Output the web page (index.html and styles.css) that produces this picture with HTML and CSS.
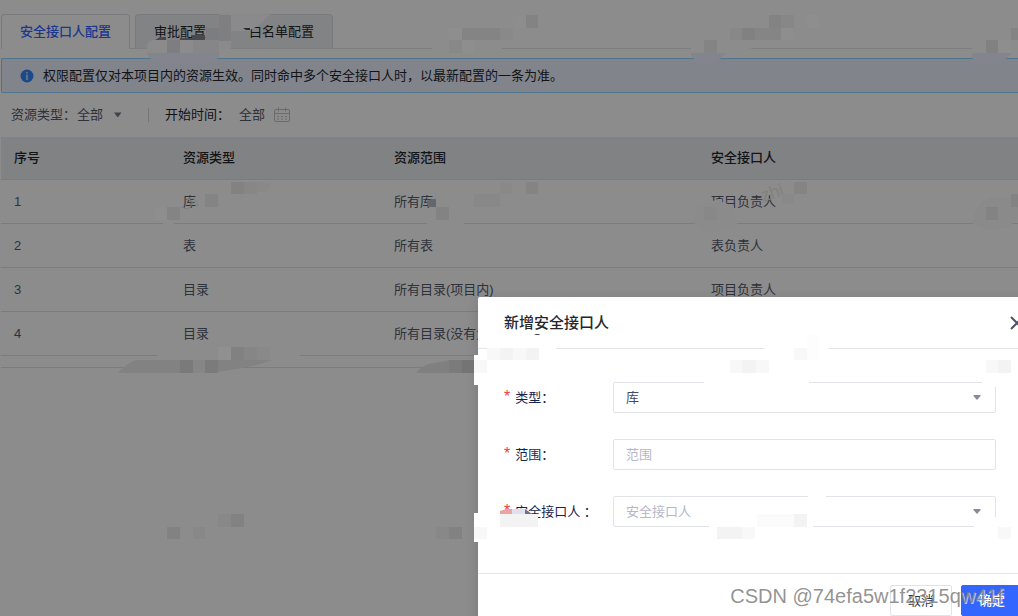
FILE: index.html
```html
<!DOCTYPE html>
<html lang="zh-CN">
<head>
<meta charset="utf-8">
<title>安全接口人配置</title>
<link rel="stylesheet" href="styles.css">
</head>
<body>
<main class="page">
  <nav class="tabs">
    <button class="tab tab-active" type="button">安全接口人配置</button>
    <button class="tab" type="button">审批配置</button>
    <button class="tab" type="button">白名单配置</button>
  </nav>
  <div class="alert">
    <svg class="info" viewBox="0 0 14 14" aria-hidden="true"><circle cx="7" cy="7" r="6.5" fill="#3388f5"/><rect x="6.3" y="3" width="1.4" height="1.5" fill="#dce9ff"/><rect x="6.3" y="5.6" width="1.4" height="5.4" fill="#dce9ff"/></svg>
    <span>权限配置仅对本项目内的资源生效。同时命中多个安全接口人时，以最新配置的一条为准。</span>
  </div>
  <div class="filters">
    <button class="filter" type="button"><span>资源类型：</span><span>全部</span><svg class="caret" viewBox="0 0 9 6" aria-hidden="true"><path d="M1 0.500h7.500L4.700 5.500z" fill="currentColor"/></svg></button>
    <span class="divider"></span>
    <button class="filter filter-time" type="button"><span class="strong">开始时间：</span><span>全部</span><svg class="calendar" viewBox="0 0 16 16" fill="none" stroke="#bfc3c8" aria-hidden="true"><rect x="0.500" y="2.500" width="15" height="12" rx="1.500"/><path d="M0.500 6.500h15M4.500 0.500v4M11.500 0.500v4M3 9.500h2M7 9.500h2M11 9.500h2M3 12h2M7 12h2M11 12h2"/></svg></button>
  </div>
  <table class="grid">
    <thead><tr><th class="c-id">序号</th><th class="c-type">资源类型</th><th class="c-scope">资源范围</th><th>安全接口人</th></tr></thead>
    <tbody>
      <tr><td>1</td><td>库</td><td>所有库</td><td>项目负责人</td></tr>
      <tr><td>2</td><td>表</td><td>所有表</td><td>表负责人</td></tr>
      <tr><td>3</td><td>目录</td><td>所有目录(项目内)</td><td>项目负责人</td></tr>
      <tr><td>4</td><td>目录</td><td>所有目录(没有负责人)</td><td>项目负责人</td></tr>
    </tbody>
  </table>
  <div class="grid-end"></div>
</main>
<div class="mask"></div>
<section class="modal" role="dialog" aria-labelledby="title">
  <header class="modal-head">
    <h2 class="title" id="title">新增安全接口人</h2>
    <button class="close" type="button" aria-label="关闭"><svg viewBox="0 0 14 14" fill="none" stroke="#4e5466" stroke-width="2"><path d="M1 1l12 12M13 1L1 13"/></svg></button>
  </header>
  <form class="form">
    <div class="row">
      <label class="label" for="type"><span class="star">*</span>类型：</label>
      <div class="field"><select class="control" id="type"><option>库</option></select><svg class="arrow" viewBox="0 0 8 5" aria-hidden="true"><path d="M0.500 0h7v1L4 5L0.500 1z" fill="#858b99"/></svg></div>
    </div>
    <div class="row">
      <label class="label" for="scope"><span class="star">*</span>范围：</label>
      <div class="field"><input class="control" id="scope" type="text" placeholder="范围"></div>
    </div>
    <div class="row">
      <label class="label" for="owner"><span class="star">*</span>安全接口人 ：</label>
      <div class="field"><select class="control empty" id="owner"><option>安全接口人</option></select><svg class="arrow" viewBox="0 0 8 5" aria-hidden="true"><path d="M0.500 0h7v1L4 5L0.500 1z" fill="#858b99"/></svg></div>
    </div>
  </form>
  <footer class="modal-foot">
    <button class="btn" type="button">取消</button>
    <button class="btn btn-primary" type="button">确定</button>
  </footer>
</section>
<svg class="mosaic" width="1018" height="616" viewBox="0 0 1018 616" aria-hidden="true">
  <!-- tab strip -->
  <path fill="#8a8a8c" d="M219 13h53l-14 13l-10 5h-17v18h-12z"/>
  <path fill="#8b8b8c" d="M147 45q2-5 7-5h66v13h-73z"/>
  <path fill="#82848e" d="M147 53h73q-2 9-12 11h-48q-9-2-13-11z"/>
  <rect x="219" y="15" width="12" height="26" fill="#7f7f81"/><rect x="206" y="28" width="13" height="12" fill="#7b7d80"/>
  <path fill="#48494c" d="M155 40l5-3h6v3zM180 40v-2h12v-3h13v5z"/>
  <rect x="167" y="40" width="13" height="13" fill="#7e7e82"/><rect x="180" y="40" width="13" height="13" fill="#8b8b8d"/><rect x="193" y="40" width="26" height="13" fill="#868689"/>
  <path fill="#28292c" d="M243 28h7v2h-4z"/>
  <!-- upper band -->
  <rect x="432" y="41" width="70" height="12" fill="#8c8c8c"/>
  <rect x="526" y="15" width="12" height="13" fill="#838383"/><rect x="513" y="15" width="13" height="13" fill="#8d8d8d"/>
  <rect x="449" y="28" width="13" height="12" fill="#8e8e8e"/><rect x="462" y="28" width="38" height="12" fill="#848484"/><rect x="500" y="28" width="13" height="12" fill="#898989"/>
  <rect x="449" y="40" width="13" height="13" fill="#888888"/><rect x="462" y="40" width="12" height="13" fill="#8e8e8e"/>
  <path fill="#8c8c8c" d="M691 41h63v7l-22 5h-41z"/><path fill="#82848e" d="M691 53h35l-6 6l-6 4h-17l-6-8z"/>
  <rect x="704" y="40" width="13" height="13" fill="#848484"/><rect x="730" y="28" width="12" height="12" fill="#888888"/><rect x="742" y="28" width="13" height="12" fill="#818181"/><rect x="755" y="28" width="26" height="12" fill="#858585"/><rect x="781" y="28" width="12" height="12" fill="#8e8e8e"/>
  <rect x="769" y="15" width="12" height="13" fill="#838383"/><rect x="781" y="15" width="13" height="13" fill="#878787"/><rect x="807" y="15" width="12" height="13" fill="#8e8e8e"/>
  <rect x="972" y="41" width="46" height="12" fill="#8c8c8c"/><path fill="#82848e" d="M972 53h40l-6 6l-7 6h-19l-8-7z"/>
  <rect x="986" y="40" width="12" height="13" fill="#818181"/><rect x="998" y="40" width="13" height="13" fill="#8e8e8e"/><rect x="1011" y="28" width="7" height="12" fill="#848484"/>
  <!-- first table row -->
  <rect x="231" y="182" width="13" height="12" fill="#828282"/><rect x="244" y="182" width="13" height="12" fill="#878787"/><path fill="#898989" d="M257 182h14l-4 10h-10z"/>
  <rect x="205" y="194" width="13" height="13" fill="#848484"/><rect x="155" y="207" width="12" height="13" fill="#8e8e8e"/><rect x="167" y="207" width="13" height="13" fill="#848484"/><rect x="163" y="220" width="11" height="6" fill="#8c8c8c"/>
  <path d="M181 207q9 5 11-4q-1-5-5-3q5-4 9 1q3 4 1 6" fill="none" stroke="#808080"/>
  <path fill="#66666f" d="M427 201l5-2h4v8h-8z"/><rect x="436" y="207" width="13" height="13" fill="#838383"/><rect x="427" y="220" width="37" height="6" fill="#8c8c8c"/>
  <rect x="474" y="194" width="26" height="13" fill="#888888"/><rect x="500" y="182" width="12" height="12" fill="#898989"/><rect x="526" y="182" width="12" height="12" fill="#848484"/>
  <path fill="#8b8b8c" d="M697 208l8-4l13-5h4v3l12 4v10l4 10q-17 7-35 4l-9-7z"/><rect x="704" y="207" width="13" height="13" fill="#888888"/>
  <text x="763" y="202" class="ghost" transform="rotate(-18 763 202)">zhi</text>
  <rect x="794" y="182" width="13" height="12" fill="#848484"/><rect x="782" y="194" width="12" height="10" fill="#898989"/>
  <path fill="#8a8a8a" d="M973 224q0-21 20-27h25v22l-10 8q-17 6-35-3z"/><rect x="986" y="207" width="12" height="13" fill="#838383"/><rect x="1011" y="194" width="7" height="13" fill="#838383"/>
  <!-- below the table -->
  <rect x="157" y="347" width="143" height="12" fill="#8c8c8c"/>
  <path fill="#828282" d="M118 373q7-9 18-13h136q-20 8-63 13z"/>
  <rect x="218" y="347" width="13" height="13" fill="#909090"/><rect x="231" y="347" width="13" height="13" fill="#818181"/><rect x="244" y="347" width="13" height="13" fill="#868686"/><rect x="257" y="347" width="13" height="13" fill="#898989"/>
  <rect x="180" y="360" width="13" height="13" fill="#7a7a7a"/><rect x="193" y="360" width="12" height="13" fill="#868686"/><rect x="205" y="360" width="13" height="13" fill="#7b7b7b"/>
  <path fill="#808080" d="M416 373q7-9 18-10l18-3h22v13z"/><rect x="449" y="360" width="13" height="13" fill="#7b7b7b"/><rect x="462" y="360" width="12" height="13" fill="#747474"/>
  <g fill="#828282"><rect x="167" y="527" width="13" height="12"/><rect x="231" y="514" width="13" height="13"/><rect x="449" y="527" width="13" height="12"/></g>
  <g fill="#888888"><rect x="193" y="527" width="12" height="12"/><rect x="218" y="514" width="13" height="13"/><rect x="436" y="527" width="13" height="12"/></g>
  <!-- dialog -->
  <g fill="#ffffff"><rect x="474" y="355" width="6" height="30"/><rect x="474" y="513" width="6" height="29"/><rect x="494" y="345" width="62" height="6"/><rect x="765" y="345" width="64" height="6"/><rect x="704" y="379" width="105" height="6"/><rect x="982" y="379" width="16" height="8"/><rect x="709" y="523" width="104" height="6"/><rect x="974" y="517" width="24" height="12"/><rect x="808" y="494" width="18" height="5"/><path d="M500 512l8-3h18l6 5v6h-32z"/></g>
  <path fill="#43444b" d="M534 335l2-1h3l1 1z"/>
  <g fill="#f3f3f3"><rect x="500" y="348" width="13" height="12"/><rect x="526" y="348" width="13" height="12"/><rect x="742" y="360" width="14" height="13"/><rect x="998" y="360" width="13" height="13"/><rect x="794" y="514" width="13" height="13"/><rect x="717" y="527" width="13" height="12"/><rect x="730" y="527" width="12" height="12"/><rect x="500" y="514" width="38" height="13"/></g>
  <g fill="#f8f8f8"><rect x="513" y="348" width="13" height="12"/><rect x="487" y="348" width="13" height="12"/><rect x="474" y="360" width="13" height="13"/><rect x="730" y="360" width="12" height="13"/><rect x="756" y="360" width="13" height="13"/><rect x="794" y="348" width="13" height="12"/><rect x="807" y="335" width="12" height="25" fill="#fdfdfd"/><rect x="986" y="360" width="12" height="13"/><rect x="757" y="514" width="37" height="13" fill="#fbfbfb"/><rect x="742" y="527" width="13" height="12"/><rect x="998" y="527" width="13" height="12"/><rect x="474" y="527" width="13" height="12"/></g>
  <path fill="#e9a3a5" d="M500 514v-3l6-2h6v5z"/><rect x="512" y="509" width="13" height="5" fill="#dfe1f3"/><path fill="#70727c" d="M525 509l7 5h-7z"/>
</svg>
<div class="watermark">CSDN @74efa5w1f2315qw41f</div>
</body>
</html>
```
FILE: styles.css
```css
* { box-sizing: border-box; }
html, body { height: 100%; }
body {
  margin: 0;
  overflow: hidden;
  position: relative;
  background: #fff;
  color: #555b6b;
  font: 13px/20px "Liberation Sans", "Noto Sans CJK SC", sans-serif;
}
button, input, select { font: inherit; color: inherit; margin: 0; }
button { padding: 0; border: 0; background: none; }
.page { padding: 14px 0 0 1px; }
.tabs { display: flex; gap: 5px; border-bottom: 1px solid #e2e4e6; }
.tab {
  height: 34px;
  padding: 0 18px;
  border: 1px solid #dcdfe3;
  border-bottom: 0;
  border-radius: 4px 4px 0 0;
  background: #edeff3;
  color: #24262b;
}
.tab-active {
  position: relative;
  margin-bottom: -1px;
  height: 35px;
  background: #fff;
  color: #3366ff;
  font-weight: 500;
}
.alert {
  display: flex;
  align-items: center;
  gap: 9px;
  height: 35px;
  margin-top: 9px;
  padding: 0 18px;
  border: 1px solid #91d5ff;
  border-right: 0;
  border-radius: 2px 0 0 2px;
  background: #edf0ff;
  color: #24262b;
}
.info { width: 14px; height: 14px; }
.filters { display: flex; align-items: center; height: 44px; padding-left: 10px; }
.filter { display: flex; align-items: center; gap: 1px; }
.caret { width: 9px; height: 6px; margin-left: 9px; color: #767b85; }
.divider { width: 1px; height: 14px; margin: 0 16px 0 26px; background: #d4d6da; }
.filter-time { gap: 9px; }
.strong { color: #24262b; }
.calendar { width: 16px; height: 16px; }
.grid { width: 100%; border-collapse: separate; border-spacing: 0; table-layout: fixed; }
.grid th, .grid td {
  height: 44px;
  padding: 0 13px;
  border-bottom: 1px solid #e0e2e4;
  text-align: left;
}
.grid th { height: 43px; background: #ebedf0; color: #24262b; font-weight: 500; }
.c-id { width: 169px; }
.c-type { width: 211px; }
.c-scope { width: 317px; }
.grid-end { height: 12px; border-bottom: 1px solid #e0e2e4; }
.mask { position: absolute; inset: 0; background: rgba(0, 0, 0, 0.45); }
.modal {
  position: absolute;
  top: 297px;
  left: 478px;
  right: -20px;
  background: #fff;
  border-radius: 2px;
  box-shadow: 0 4px 12px rgba(0, 0, 0, 0.15);
}
.modal-head {
  display: flex;
  align-items: center;
  justify-content: space-between;
  height: 52px;
  padding: 0 14px 0 26px;
  border-bottom: 1px solid #e4e5e8;
}
.title { margin: 0; color: #24262b; font-size: 15px; font-weight: 500; }
.close { width: 14px; height: 14px; }
.close svg { display: block; }
.form { display: grid; gap: 26px; padding: 33px 42px 46px 26px; }
.row { display: flex; align-items: center; }
.label { width: 109px; color: #17234d; }
.star { margin-right: 5px; color: #e8413f; font-size: 16px; }
.field { position: relative; flex: 1; }
.control {
  display: block;
  width: 100%;
  height: 31px;
  padding: 0 12px;
  border: 1px solid #e1e3e9;
  border-radius: 2px;
  background: #fff;
  color: #454b5b;
  appearance: none;
  outline: 0;
}
.control::placeholder, .empty { color: #b6b6c8; opacity: 1; }
.arrow { position: absolute; right: 15px; top: 13px; width: 8px; height: 5px; }
.modal-foot {
  display: flex;
  justify-content: flex-end;
  gap: 9px;
  padding: 11px 15px 12px;
  border-top: 1px solid #e4e5e8;
}
.btn {
  width: 62px;
  height: 31px;
  border: 1px solid #e1e3e9;
  border-radius: 2px;
  background: #fff;
  color: #30364a;
}
.btn-primary { border-color: #3366ff; background: #3366ff; color: #fff; font-weight: 500; }
.mosaic { position: absolute; top: 0; left: 0; pointer-events: none; }
.ghost { font-size: 18px; fill: #818181; }
.watermark {
  position: absolute;
  right: 15px;
  bottom: 6px;
  color: rgba(128, 128, 128, 0.85);
  font-size: 20px;
  line-height: 28px;
  white-space: nowrap;
  text-shadow: 1px 1px 0 rgba(255, 255, 255, 0.6);
  pointer-events: none;
}
```
